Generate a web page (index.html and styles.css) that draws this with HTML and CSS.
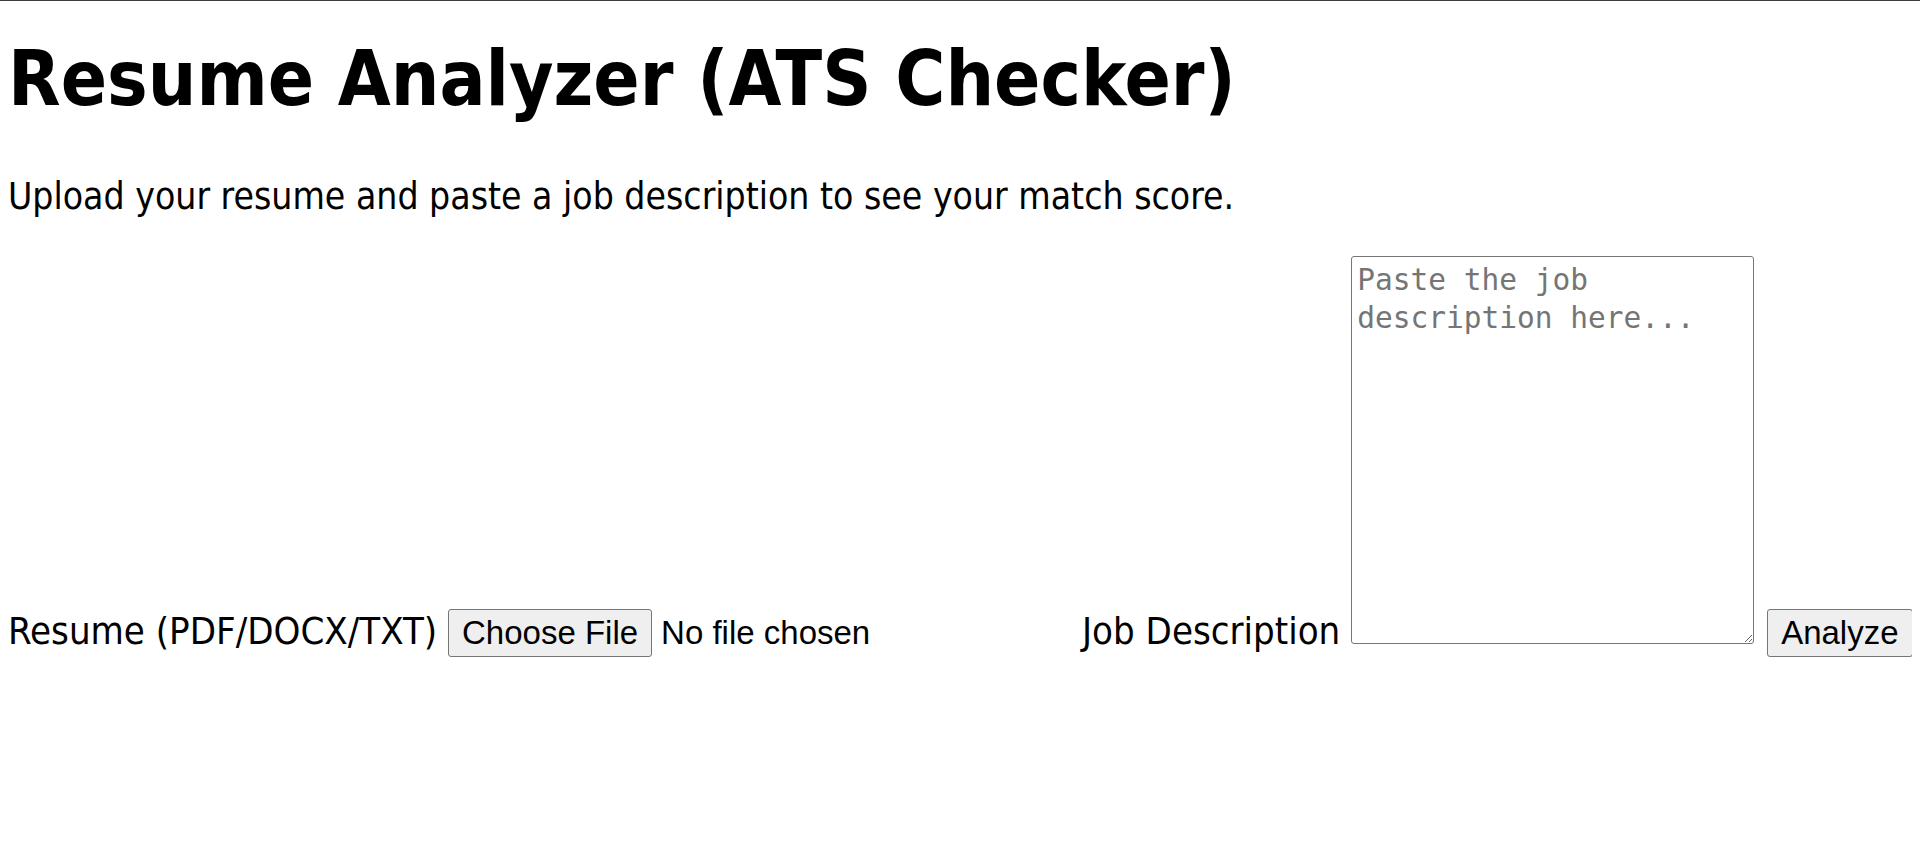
FILE: index.html
```html
<!DOCTYPE html>
<html lang="en">
<head>
<meta charset="utf-8">
<title>Resume Analyzer (ATS Checker)</title>
<link rel="stylesheet" href="styles.css">
</head>
<body>
<h1 class="title">Resume Analyzer (ATS Checker)</h1>
<p class="lead">Upload your resume and paste a job description to see your match score.</p>
<form class="analyzer">
  <label class="field">Resume (PDF/DOCX/TXT) <span class="file"><input class="file-input" type="file" accept=".pdf,.docx,.txt"><span class="btn">Choose File</span><span class="file-name">No file chosen</span></span></label>
  <label class="field field-jd">Job Description <textarea class="jd" placeholder="Paste the job description here..."></textarea></label>
  <span class="submit-wrap"><button class="btn" type="submit">Analyze</button></span>
</form>
</body>
</html>
```

FILE: styles.css
```css
html {
  border-top: 1px solid #3c3c3c;
  background: #fff;
}

body {
  margin: 0 8px;
  color: #000;
  font-family: "DejaVu Sans Condensed", "DejaVu Sans", sans-serif;
  font-stretch: condensed;
}

.title {
  margin: 33px 0 0;
  font-size: 76px;
  line-height: 90px;
  font-weight: bold;
}

.lead {
  margin: 51px 0 37px;
  font-size: 37px;
  line-height: 44px;
}

.analyzer {
  display: flex;
  align-items: baseline;
  gap: 13px;
  font-size: 38px;
  line-height: 44px;
}

.field {
  display: block;
  white-space: nowrap;
}

.file {
  display: inline-block;
  width: 621px;
  white-space: nowrap;
}

.file-input {
  display: none;
}

.btn {
  display: inline-block;
  box-sizing: border-box;
  margin: 0;
  padding: 4px 13px;
  border: 1px solid #767676;
  border-radius: 3px;
  background: #efefef;
  color: #000;
  font-family: "Liberation Sans", Arial, sans-serif;
  font-stretch: normal;
  font-size: 33px;
  line-height: 38px;
}

.file-name {
  margin-left: 9px;
  font-family: "Liberation Sans", Arial, sans-serif;
  font-stretch: normal;
  font-size: 33px;
}

.jd {
  box-sizing: border-box;
  width: 403px;
  height: 388px;
  margin: 0;
  padding: 5px;
  border: 1px solid #767676;
  border-radius: 3px;
  font-family: "DejaVu Sans Mono", monospace;
  font-size: 29.5px;
  line-height: 37.5px;
  vertical-align: baseline;
  resize: both;
}

.jd::placeholder {
  color: #757575;
}

.submit-wrap {
  display: block;
}
```
